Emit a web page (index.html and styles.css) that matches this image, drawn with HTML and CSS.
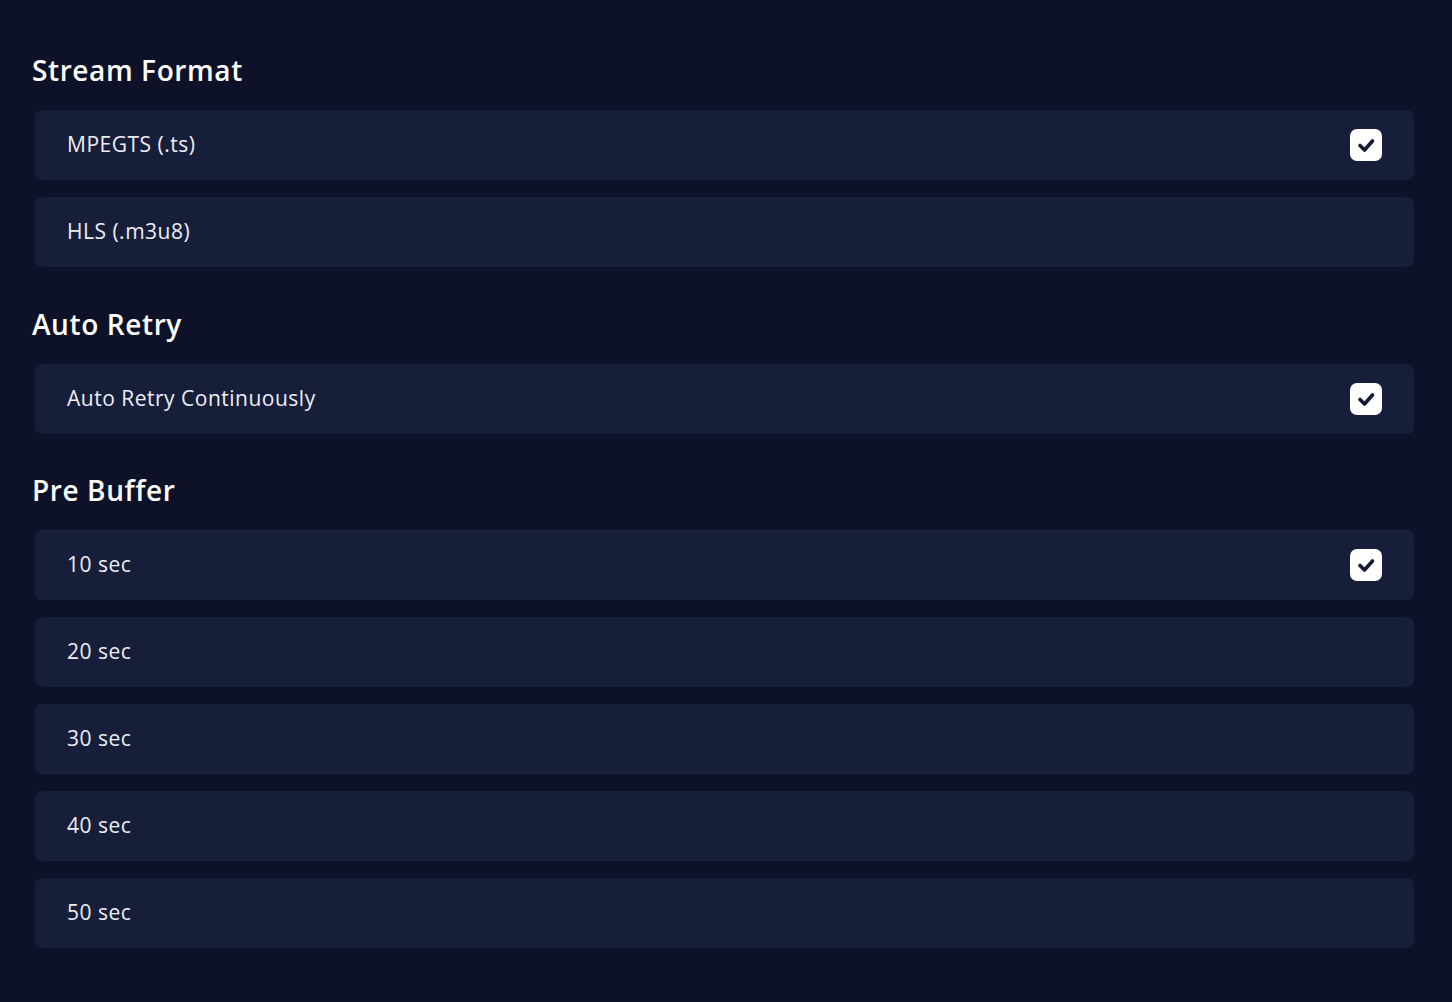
FILE: index.html
```html
<!DOCTYPE html>
<html lang="en">
<head>
    <meta charset="UTF-8">
    <meta name="viewport" content="width=device-width, initial-scale=1.0">
    <title>Player Settings</title>
    <link rel="stylesheet" href="styles.css">
</head>
<body>
    <div class="settings">
        <section class="group">
            <h2>Stream Format</h2>
            <div class="option">
                <span>MPEGTS (.ts)</span>
                <span class="check"><svg viewBox="0 0 32 32"><path d="M10 16.5l4.5 4.5 8-9"/></svg></span>
            </div>
            <div class="option">
                <span>HLS (.m3u8)</span>
            </div>
        </section>
        <section class="group">
            <h2>Auto Retry</h2>
            <div class="option">
                <span>Auto Retry Continuously</span>
                <span class="check"><svg viewBox="0 0 32 32"><path d="M10 16.5l4.5 4.5 8-9"/></svg></span>
            </div>
        </section>
        <section class="group">
            <h2>Pre Buffer</h2>
            <div class="option">
                <span>10 sec</span>
                <span class="check"><svg viewBox="0 0 32 32"><path d="M10 16.5l4.5 4.5 8-9"/></svg></span>
            </div>
            <div class="option"><span>20 sec</span></div>
            <div class="option"><span>30 sec</span></div>
            <div class="option"><span>40 sec</span></div>
            <div class="option"><span>50 sec</span></div>
        </section>
    </div>
</body>
</html>
```

FILE: styles.css
```css
html, body {
    margin: 0;
    background-color: #0d1229;
}
body {
    font-family: "Open Sans", "Noto Sans", sans-serif;
    color: #eceef3;
}
.settings {
    padding: 52px 38px 0 32px;
    display: flex;
    flex-direction: column;
    gap: 38.5px;
}
.group {
    display: flex;
    flex-direction: column;
    gap: 17px;
}
.group h2 {
    margin: 0 0 5px 0;
    height: 36px;
    line-height: 36px;
    font-size: 28px;
    font-weight: 600;
    letter-spacing: 0.6px;
    color: #ffffff;
}
.option {
    margin-left: 3px;
    height: 70px;
    padding: 0 32px 2px 32px;
    background-color: #171e3a;
    border-radius: 7px;
    display: flex;
    align-items: center;
    justify-content: space-between;
    font-size: 21px;
    letter-spacing: 0.5px;
    box-sizing: border-box;
}
.check {
    width: 32px;
    height: 32px;
    margin-top: 2px;
    background-color: #ffffff;
    border-radius: 7px;
    display: flex;
}
.check svg {
    width: 32px;
    height: 32px;
}
.check path {
    fill: none;
    stroke: #141a36;
    stroke-width: 3.6;
    stroke-linecap: round;
    stroke-linejoin: round;
}
```
